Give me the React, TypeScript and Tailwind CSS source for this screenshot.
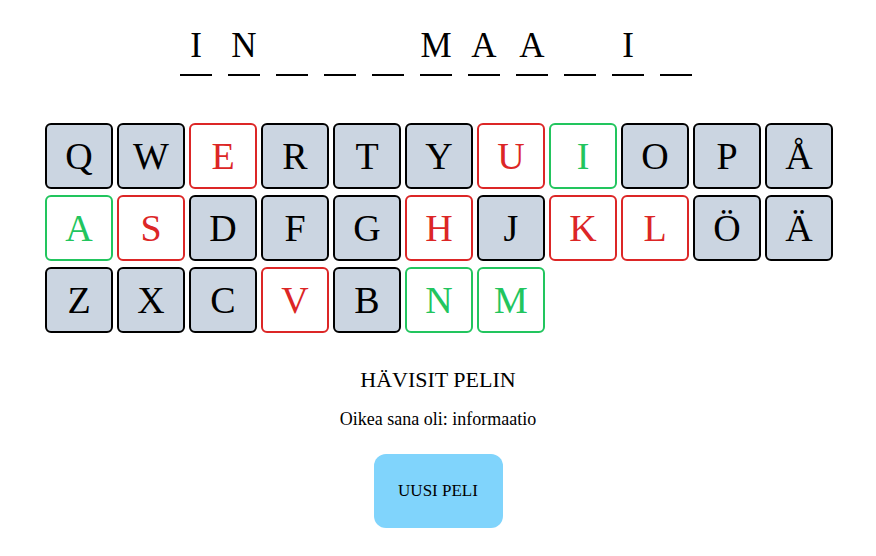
import React from "react";

type KeyState = "used" | "wrong" | "right" | "none";

const rows: [string, KeyState][][] = [
  [["Q", "used"], ["W", "used"], ["E", "wrong"], ["R", "used"], ["T", "used"], ["Y", "used"], ["U", "wrong"], ["I", "right"], ["O", "used"], ["P", "used"], ["Å", "used"]],
  [["A", "right"], ["S", "wrong"], ["D", "used"], ["F", "used"], ["G", "used"], ["H", "wrong"], ["J", "used"], ["K", "wrong"], ["L", "wrong"], ["Ö", "used"], ["Ä", "used"]],
  [["Z", "used"], ["X", "used"], ["C", "used"], ["V", "wrong"], ["B", "used"], ["N", "right"], ["M", "right"]],
];

const word = ["I", "N", "", "", "", "M", "A", "A", "", "I", ""];

function Key({ letter, state }: { letter: string; state: KeyState }) {
  const cls =
    state === "used"
      ? "bg-[#cbd5e1] border-black text-black"
      : state === "wrong"
      ? "bg-white border-[#dc2626] text-[#dc2626]"
      : state === "right"
      ? "bg-white border-[#22c55e] text-[#22c55e]"
      : "bg-white border-black text-black";
  return (
    <div className={`w-[68px] h-[66px] rounded-[6px] border-2 flex items-center justify-center text-[38px] ${cls}`}>
      {letter}
    </div>
  );
}

export default function App() {
  return (
    <div className="w-[876px] h-[556px] bg-white flex flex-col items-center font-['Liberation_Serif',serif] text-black">
      <div className="flex gap-4 mt-[29px] self-start ml-[180px]">
        {word.map((c, i) => (
          <div key={i} className="w-[32px] h-[47px] border-b-2 border-black flex items-end justify-center text-[35px] leading-none pb-[11px]">
            {c}
          </div>
        ))}
      </div>
      <div className="flex flex-col gap-[6px] mt-[47px] self-start ml-[45px]">
        {rows.map((row, r) => (
          <div key={r} className="flex gap-1">
            {row.map(([l, s]) => (
              <Key key={l} letter={l} state={s} />
            ))}
          </div>
        ))}
      </div>
      <div className="mt-[36px] text-[22px] leading-none">HÄVISIT PELIN</div>
      <div className="mt-[19px] text-[18px] leading-none">Oikea sana oli: informaatio</div>
      <button className="mt-[26px] w-[129px] h-[74px] rounded-[12px] bg-[#80d4fc] text-[17px]">UUSI PELI</button>
    </div>
  );
}
